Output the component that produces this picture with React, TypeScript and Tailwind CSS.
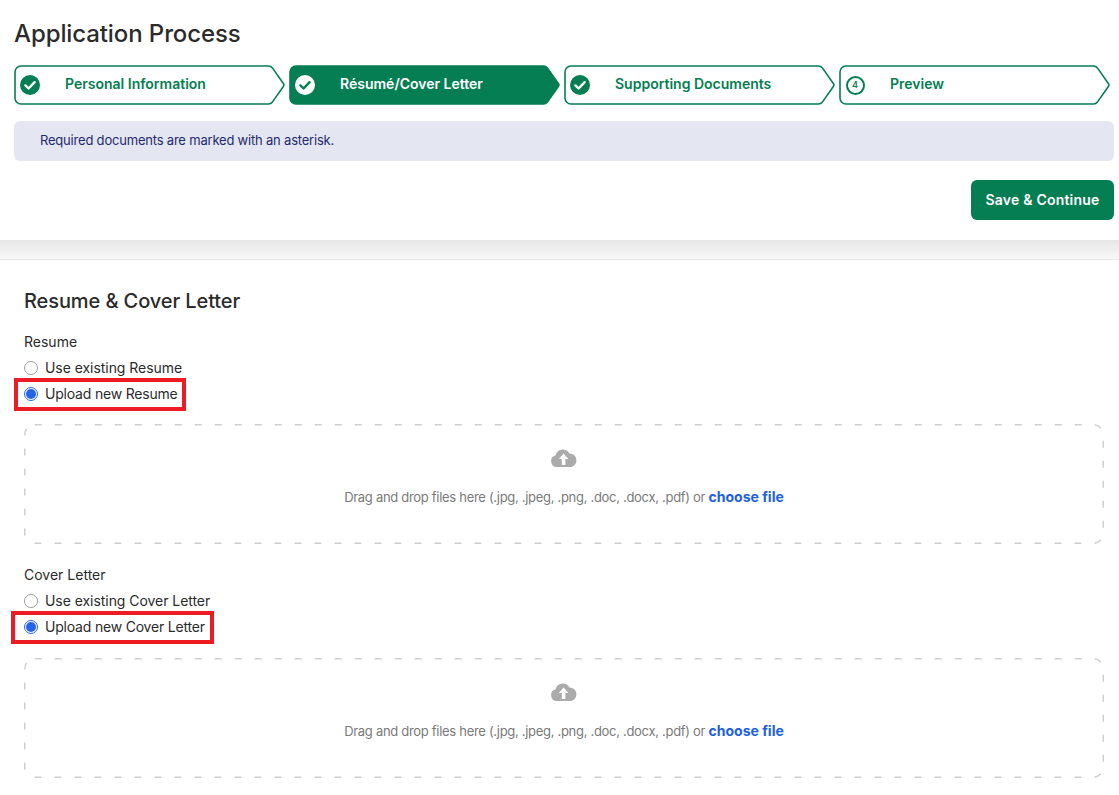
const font = "font-['Inter','Noto_Sans',sans-serif]";

function StepShape({ filled }: { filled: boolean }) {
  return (
    <svg className="absolute inset-0" width="271" height="40" viewBox="0 0 271 40" fill="none">
      <path
        d="M7 1H254.5a5 5 0 0 1 3.9 1.9L269.5 18.8a2 2 0 0 1 0 2.4L258.4 37.1a5 5 0 0 1-3.9 1.9H7a6 6 0 0 1-6-6V7a6 6 0 0 1 6-6Z"
        fill={filled ? '#047e52' : '#ffffff'}
        stroke="#047e52"
        strokeWidth="1.6"
      />
    </svg>
  );
}

function CheckBadge({ inverted }: { inverted: boolean }) {
  return (
    <svg width="20" height="20" viewBox="0 0 20 20">
      <circle cx="10" cy="10" r="10" fill={inverted ? '#ffffff' : '#047e52'} />
      <path
        d="M5.4 10.4 8.6 13.5 14.6 7.2"
        fill="none"
        stroke={inverted ? '#047e52' : '#ffffff'}
        strokeWidth="2.4"
        strokeLinecap="round"
        strokeLinejoin="round"
      />
    </svg>
  );
}

function Step({ label, active, number }: { label: string; active?: boolean; number?: number }) {
  return (
    <div className="relative h-10 w-[271px] shrink-0">
      <StepShape filled={!!active} />
      <div className="relative flex h-full items-center pl-[6px]">
        <div className="flex h-5 w-5 items-center justify-center">
          {number ? (
            <div className="flex h-[19px] w-[19px] items-center justify-center rounded-full border-2 border-[#047e52] text-[9px] font-semibold text-[#047e52]">
              {number}
            </div>
          ) : (
            <CheckBadge inverted={!!active} />
          )}
        </div>
        <span
          className={`mb-[2px] ml-[25px] text-sm font-semibold ${active ? 'text-white' : 'text-[#047e52]'}`}
        >
          {label}
        </span>
      </div>
    </div>
  );
}

function Radio({ label, checked }: { label: string; checked?: boolean }) {
  return (
    <div className="flex h-[26px] items-center gap-[7px]">
      <span
        className={`flex h-[14px] w-[14px] items-center justify-center rounded-full border ${
          checked ? 'border-[#2563eb]' : 'border-[#a0a0a0]'
        }`}
      >
        {checked && <span className="h-[10px] w-[10px] rounded-full bg-[#2563eb]" />}
      </span>
      <span
        className={`text-sm text-[#2b2b2b] ${checked ? 'tracking-[-0.2px]' : 'tracking-[-0.05px]'}`}
      >
        {label}
      </span>
    </div>
  );
}

function DropZone() {
  return (
    <div className="relative flex h-[120px] w-[1080px] flex-col items-center pt-[22px]">
      <svg className="absolute inset-0" width="1080" height="120" fill="none">
        <rect
          x="0.75"
          y="0.75"
          width="1078.5"
          height="118.5"
          rx="10"
          stroke="#cfcfcf"
          strokeWidth="1.5"
          strokeDasharray="7 13"
        />
      </svg>
      <svg width="28" height="24" viewBox="0 0 28 24">
        <path
          d="M7 21a6 6 0 0 1-1.4-11.8A7.6 7.6 0 0 1 12.8 3.5a7.4 7.4 0 0 1 6.6 3.9A6.9 6.9 0 0 1 21.2 21Z"
          fill="#ababab"
        />
        <path d="M13.6 7.5 8.8 13h3v6h3.6v-6h3Z" fill="#ffffff" />
      </svg>
      <p className="mt-[17px] text-[13px] leading-5 tracking-[-0.3px] text-[#7a7a7a]">
        Drag and drop files here (.jpg, .jpeg, .png, .doc, .docx, .pdf) or{' '}
        <span className="text-sm font-bold tracking-normal text-[#1d5fe0]">choose file</span>
      </p>
    </div>
  );
}

export default function App() {
  return (
    <div className={`h-[795px] w-[1119px] overflow-hidden bg-white ${font}`}>
      <div className="h-[240px] px-[14px] pt-[18px]">
        <h1 className="text-2xl leading-8 font-medium tracking-[-0.1px] text-[#2b2b2b]">
          Application Process
        </h1>
        <div className="mt-[15px] flex gap-1">
          <Step label="Personal Information" />
          <Step label="Résumé/Cover Letter" active />
          <Step label="Supporting Documents" />
          <Step label="Preview" number={4} />
        </div>
        <div className="mt-4 flex h-10 w-[1100px] items-center rounded-md bg-[#e4e7f1] pl-[26px] text-[13px] tracking-[-0.2px] text-[#1f2a6e]">
          Required documents are marked with an asterisk.
        </div>
        <div className="mt-[19px] flex w-[1100px] justify-end">
          <button className="h-10 w-[143px] rounded-md bg-[#047e52] text-sm font-semibold tracking-[0.2px] text-white">
            Save &amp; Continue
          </button>
        </div>
      </div>

      <div className="h-5 border-b border-[#e8e8e8] bg-gradient-to-b from-[#e6e6e6] to-[#f8f8f8]" />

      <div className="px-6 pt-[27px]">
        <h2 className="text-xl leading-7 font-medium tracking-[-0.1px] text-[#2b2b2b]">
          Resume &amp; Cover Letter
        </h2>

        <p className="mt-[17px] text-sm leading-5 text-[#2b2b2b]">Resume</p>
        <div className="mt-[3px]">
          <Radio label="Use existing Resume" />
          <div className="relative">
            <Radio label="Upload new Resume" checked />
            <div className="absolute top-[-3px] left-[-10px] h-[33px] w-[172px] border-4 border-[#ed1c24]" />
          </div>
        </div>
        <div className="mt-[17px]">
          <DropZone />
        </div>

        <p className="mt-[21px] text-sm leading-5 text-[#2b2b2b]">Cover Letter</p>
        <div className="mt-[3px]">
          <Radio label="Use existing Cover Letter" />
          <div className="relative">
            <Radio label="Upload new Cover Letter" checked />
            <div className="absolute top-[-3px] left-[-13px] h-[33px] w-[203px] border-4 border-[#ed1c24]" />
          </div>
        </div>
        <div className="mt-[18px]">
          <DropZone />
        </div>
      </div>
    </div>
  );
}
